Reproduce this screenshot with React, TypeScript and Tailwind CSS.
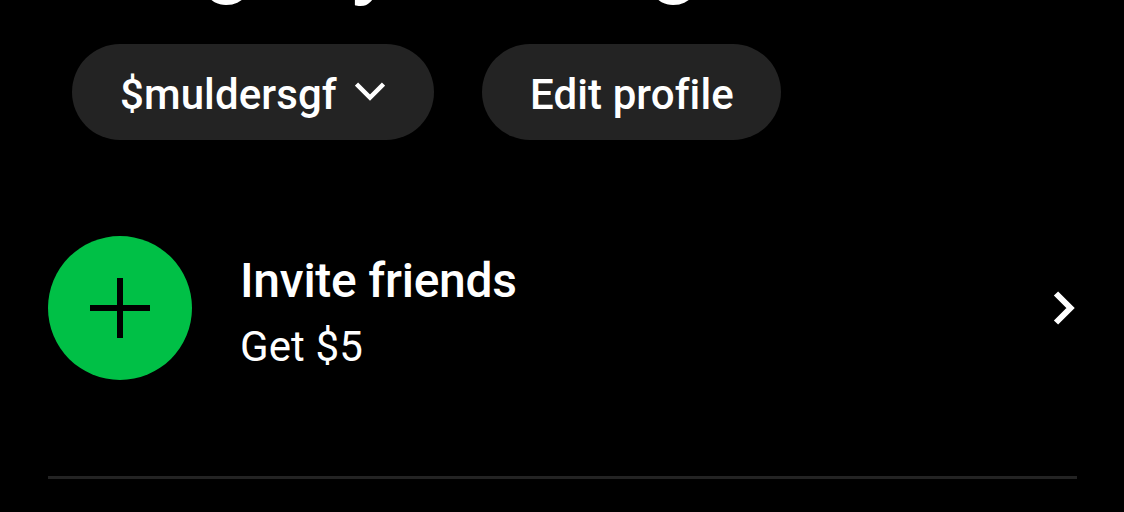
import React from "react";

// Descenders of the profile name, scrolled under the top edge
const ProfileName: React.FC = () => (
  <div className="relative h-11 overflow-hidden text-[84px] font-bold leading-none">
    <span className="absolute left-[204px] -top-[82px]">g</span>
    <span className="absolute left-[350px] -top-[82px]">y</span>
    <span className="absolute left-[651px] -top-[82px]">g</span>
  </div>
);

const InviteRow: React.FC = () => (
  <div className="mx-12 mt-24 flex h-36 items-center">
    <div className="flex size-36 items-center justify-center rounded-full bg-[#00c046]">
      <svg width="60" height="60" viewBox="0 0 60 60" fill="none">
        <path d="M30 0V60M0 30H60" stroke="#000" strokeWidth="6" />
      </svg>
    </div>
    <div className="ml-12 flex flex-1 flex-col whitespace-nowrap pt-3.5">
      <p className="text-[48px] font-medium leading-[64px] tracking-[-0.25px]">
        Invite friends
      </p>
      <p className="text-[42px] font-normal leading-[68px] tracking-[0.1px]">
        Get $5
      </p>
    </div>
    <svg width="24" height="36" viewBox="0 0 24 36" fill="none">
      <path d="M4 3.5L18.5 18L4 32.5" stroke="#fff" strokeWidth="6" />
    </svg>
  </div>
);

export default function App() {
  return (
    <div className="h-[512px] w-[1124px] overflow-hidden bg-black font-['Roboto',sans-serif] text-white">
      <ProfileName />
      <div className="ml-[72px] flex gap-12 text-[42px] font-medium leading-none tracking-[0.1px]">
        <button className="flex h-24 w-[362px] items-center whitespace-nowrap rounded-full bg-[#232323] pl-12">
          <span className="w-[235px] pt-1.5 text-left">$muldersgf</span>
          <svg width="30" height="20" viewBox="0 0 30 20" fill="none">
            <path d="M1.5 2L15 15.5L28.5 2" stroke="#fff" strokeWidth="4.5" />
          </svg>
        </button>
        <button className="flex h-24 w-[299px] items-center whitespace-nowrap rounded-full bg-[#232323] pl-12 pt-1.5">
          Edit profile
        </button>
      </div>
      <InviteRow />
      <div className="ml-12 mt-24 h-[3px] w-[1029px] bg-[#232323]" />
    </div>
  );
}
